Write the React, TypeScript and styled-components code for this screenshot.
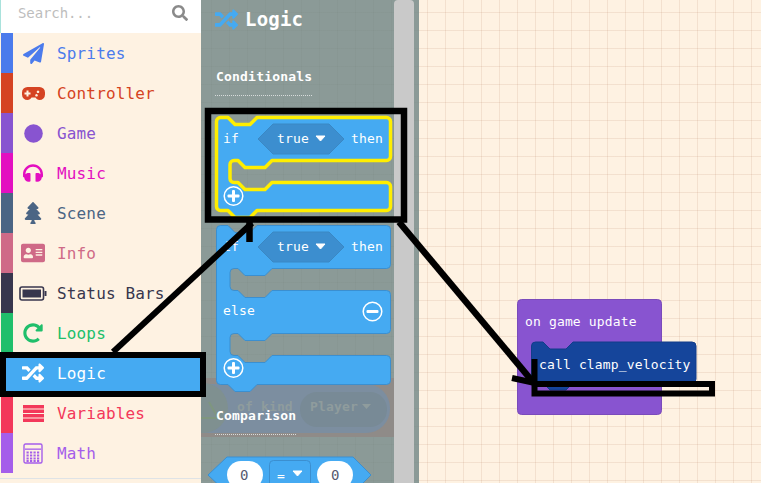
import { ReactNode } from 'react'
import styled, { createGlobalStyle } from 'styled-components'
import {
  FaPaperPlane,
  FaHeadphones,
  FaTree,
  FaAddressCard,
  FaRedoAlt,
  FaRandom,
  FaSearch,
} from 'react-icons/fa'

const MONO = '"DejaVu Sans Mono", "Liberation Mono", monospace'
const CREAM = '#fef2e2'
const LOGIC = '#45aaf2'
const LOGIC_DARK = '#3c8ecf'

const GlobalStyle = createGlobalStyle`
  html, body {
    margin: 0;
    padding: 0;
    background: ${CREAM};
    font-family: ${MONO};
  }
`

const Page = styled.div`
  position: relative;
  display: flex;
  width: 761px;
  height: 483px;
  overflow: hidden;
`

const Sidebar = styled.div`
  width: 201px;
  flex: none;
  display: flex;
  flex-direction: column;
  background: ${CREAM};
`

const SearchBar = styled.div`
  height: 33px;
  flex: none;
  display: flex;
  align-items: center;
  justify-content: space-between;
  padding: 0 13px 7px 17px;
  background: #fff;
  border-left: 1px solid #a9e2dc;
  box-sizing: border-box;
  color: #8a8a8a;
`

const SearchHint = styled.span`
  color: #bdbdbd;
  font-size: 14px;
  letter-spacing: -0.1px;
`

const Category = styled.div<{ $color: string; $active?: boolean }>`
  height: 40px;
  flex: none;
  display: flex;
  align-items: center;
  margin-left: 1px;
  border-left: 12px solid ${(p) => p.$color};
  background: ${(p) => (p.$active ? p.$color : 'transparent')};
  color: ${(p) => (p.$active ? '#fff' : p.$color)};
  font-size: 16px;
  letter-spacing: 0.15px;
  white-space: pre;
`

const CategoryIcon = styled.span`
  width: 40px;
  margin-right: 4px;
  flex: none;
  display: flex;
  align-items: center;
  justify-content: center;
`

const SidebarFoot = styled.div`
  margin-top: 5px;
  border-top: 1px solid #dfe3e6;
`

const Flyout = styled.div`
  position: relative;
  width: 218px;
  flex: none;
  display: flex;
  padding-right: 5px;
  box-sizing: border-box;
  background-color: #8b9a97;
  background-image:
    linear-gradient(rgba(70, 60, 50, 0.035) 1px, transparent 1px),
    linear-gradient(90deg, rgba(70, 60, 50, 0.035) 1px, transparent 1px);
  background-size: 18px 18px;
  background-position: 10px 12px;
`

const GhostBlock = styled.svg`
  position: absolute;
  left: 0;
  top: 378px;
`

const FlyoutBody = styled.div`
  position: relative;
  flex: 1;
  display: flex;
  flex-direction: column;
  min-width: 0;
`

const Scrollbar = styled.div`
  width: 20px;
  flex: none;
  background: #c9c9c9;
  border-radius: 4px 4px 0 0;
`

const FlyoutTitle = styled.div`
  height: 38px;
  flex: none;
  display: flex;
  align-items: center;
  gap: 7px;
  padding-left: 14px;
  color: #fff;
  font-size: 19px;
  font-weight: bold;
  letter-spacing: 0.2px;
`

const SectionHeading = styled.div<{ $width: number; $top: number }>`
  width: ${(p) => p.$width}px;
  height: 27px;
  flex: none;
  padding-left: 1px;
  box-sizing: content-box;
  margin: ${(p) => p.$top}px 0 0 14px;
  color: #fff;
  font-size: 13px;
  font-weight: bold;
  letter-spacing: 0.2px;
  line-height: 18px;
  border-bottom: 1px dotted #d8dcdc;
`

const BlockArt = styled.svg<{ $top?: number }>`
  display: block;
  flex: none;
  margin-top: ${(p) => p.$top ?? 0}px;
  overflow: visible;
`

const BlockText = styled.text`
  fill: #fff;
  font-family: ${MONO};
  font-size: 13px;
  letter-spacing: 0.15px;
`

const ValueText = styled(BlockText)`
  fill: #575a70;
  font-size: 14px;
`

const GhostText = styled(BlockText)`
  fill: #8f9c9d;
  font-weight: bold;
`

const Workspace = styled.div`
  position: relative;
  flex: 1;
  background-color: ${CREAM};
  background-image:
    linear-gradient(rgba(190, 140, 110, 0.17) 1px, transparent 1px),
    linear-gradient(90deg, rgba(190, 140, 110, 0.17) 1px, transparent 1px);
  background-size: 18px 18px;
  background-position: 8px 12px;
`

const CanvasBlock = styled.svg`
  position: absolute;
  left: 98px;
  top: 299px;
`

const Annotations = styled.svg`
  position: absolute;
  left: 0;
  top: 0;
  pointer-events: none;
`

const Gamepad = () => (
  <svg width="23" height="13" viewBox="0 0 23 13">
    <path
      fillRule="evenodd"
      fill="currentColor"
      d="M5.5 0h12a5.5 5.5 0 0 1 5.5 5.5v2a5.5 5.5 0 0 1-5.5 5.5c-2 0-3-1-4-2.5h-4c-1 1.500-2 2.500-4 2.500A5.500 5.500 0 0 1 0 7.500v-2A5.500 5.500 0 0 1 5.500 0ZM4.500 3.500v2h-2v2h2v2h2v-2h2v-2h-2v-2ZM16 3.500a1.300 1.300 0 1 0 .01 0ZM14.500 7a1.300 1.300 0 1 0 .01 0Z"
    />
  </svg>
)

const GameDot = () => (
  <svg width="19" height="19" viewBox="0 0 19 19">
    <circle cx="9.500" cy="9.500" r="9.300" fill="currentColor" />
  </svg>
)

const Battery = () => (
  <svg width="28" height="15" viewBox="0 0 28 15">
    <rect x="1" y="1" width="23.500" height="13" rx="2" fill="none" stroke="currentColor" strokeWidth="1.600" />
    <rect x="3.500" y="3.500" width="18.500" height="8" fill="currentColor" />
    <rect x="25.500" y="5" width="2" height="5" fill="currentColor" />
  </svg>
)

const Bars = () => (
  <svg width="21" height="17" viewBox="0 0 21 17">
    {[0, 4.500, 9, 13.500].map((y) => (
      <rect key={y} y={y} width="21" height="3.500" fill="currentColor" />
    ))}
  </svg>
)

const Calculator = () => (
  <svg width="20" height="21" viewBox="0 0 20 21">
    <rect x="1" y="1" width="18" height="19" rx="1.500" fill="none" stroke="currentColor" strokeWidth="1.400" />
    <rect x="2" y="5.500" width="16" height="1.300" fill="currentColor" />
    {[8.500, 11.500, 14.500, 17].map((y) =>
      [3.500, 7, 10.500, 14].map((x) => (
        <rect key={`${x}-${y}`} x={x} y={y} width="2.200" height="2" fill="currentColor" />
      )),
    )}
  </svg>
)

interface CategoryItem {
  label: string
  color: string
  icon: ReactNode
  active?: boolean
}

const categories: CategoryItem[] = [
  { label: 'Sprites', color: '#4b7bec', icon: <FaPaperPlane size={21} /> },
  { label: 'Controller', color: '#d54322', icon: <Gamepad /> },
  { label: 'Game', color: '#8854d0', icon: <GameDot /> },
  { label: 'Music', color: '#e30fc0', icon: <FaHeadphones size={20} /> },
  { label: 'Scene', color: '#4b6584', icon: <FaTree size={22} /> },
  { label: 'Info', color: '#cf6a87', icon: <FaAddressCard size={24} /> },
  { label: 'Status Bars', color: '#38364d', icon: <Battery /> },
  { label: 'Loops', color: '#20bf6b', icon: <FaRedoAlt size={20} /> },
  { label: 'Logic', color: LOGIC, icon: <FaRandom size={22} />, active: true },
  { label: 'Variables', color: '#f3385a', icon: <Bars /> },
  { label: 'Math', color: '#a55eea', icon: <Calculator /> },
]

// top edge, the gaps of the C shapes as [row bottom, next row top], bottom edge
function blockPath(top: number, gaps: [number, number][], end: number) {
  let d = `M15.500 ${top + 4} a4 4 0 0 1 4 -4 H27 l7 7 h15 l7 -7 H185.500 a4 4 0 0 1 4 4 `
  gaps.forEach(([bottom, next]) => {
    d += `V${bottom - 4} a4 4 0 0 1 -4 4 H71 l-7 7 h-20 l-7 -7 H33 a4 4 0 0 0 -4 4 V${next - 4} a4 4 0 0 0 4 4 H37 l7 7 h20 l7 -7 H185.500 a4 4 0 0 1 4 4 `
  })
  return `${d}V${end - 4} a4 4 0 0 1 -4 4 H56 l-7 7 h-15 l-7 -7 H19.500 a4 4 0 0 1 -4 -4 Z`
}

const Caret = ({ x, y }: { x: number; y: number }) => (
  <path d={`M${x} ${y} h9 l-4.500 5 Z`} fill="#fff" stroke="#fff" strokeWidth="1" strokeLinejoin="round" />
)

const TrueDropdown = ({ y }: { y: number }) => (
  <g>
    <path
      d={`M57 ${y + 15} L72 ${y} H128 L143 ${y + 15} L128 ${y + 30} H72 Z`}
      fill={LOGIC_DARK}
      stroke="#3a88c4"
    />
    <BlockText x="76" y={y + 19}>true</BlockText>
    <Caret x={115} y={y + 12} />
  </g>
)

const RoundButton = ({ x, y, minus }: { x: number; y: number; minus?: boolean }) => (
  <g>
    <circle cx={x} cy={y} r="9.300" fill="none" stroke="#fff" strokeWidth="1.500" />
    <rect x={x - 6} y={y - 1.500} width="12" height="3" rx="1" fill="#fff" />
    {!minus && <rect x={x - 1.500} y={y - 6} width="3" height="12" rx="1" fill="#fff" />}
  </g>
)

const IfThenBlock = () => (
  <BlockArt width="193" height="110">
    <path
      d={blockPath(4.500, [[47.500, 69.500]], 97.500)}
      fill={LOGIC}
      stroke="#ffee00"
      strokeWidth="3.500"
      strokeLinejoin="round"
    />
    <BlockText x="22" y="30">if</BlockText>
    <TrueDropdown y={11} />
    <BlockText x="150" y="30">then</BlockText>
    <RoundButton x={32.500} y={83} />
  </BlockArt>
)

const IfElseBlock = () => (
  <BlockArt width="193" height="170">
    <path
      d={blockPath(2.500, [[45.500, 67.500], [110.500, 132.500]], 161.500)}
      fill={LOGIC}
      stroke="#3b8fd0"
    />
    <BlockText x="22" y="28">if</BlockText>
    <TrueDropdown y={9} />
    <BlockText x="150" y="28">then</BlockText>
    <BlockText x="22" y="92">else</BlockText>
    <RoundButton x={171.500} y={88.500} minus />
    <RoundButton x={32.500} y={145} />
  </BlockArt>
)

const CompareBlock = () => (
  <BlockArt width="193" height="38" $top={21}>
    <path d="M7 19 L26 1 H152 L170 19 L152 37 H26 Z" fill={LOGIC} stroke="#3b8fd0" />
    <rect x="26" y="5" width="36" height="28" rx="14" fill="#fff" />
    <ValueText x="39" y="24">0</ValueText>
    <rect x="68.500" y="4.500" width="41" height="29" rx="4" fill={LOGIC} stroke="#3b8fd0" />
    <BlockText x="76" y="24">=</BlockText>
    <Caret x={92} y={15} />
    <rect x="116" y="5" width="36" height="28" rx="14" fill="#fff" />
    <ValueText x="130" y="24">0</ValueText>
  </BlockArt>
)

export default function App() {
  return (
    <Page>
      <GlobalStyle />
      <Sidebar>
        <SearchBar>
          <SearchHint>Search...</SearchHint>
          <FaSearch size={16} />
        </SearchBar>
        {categories.map((item) => (
          <Category key={item.label} $color={item.color} $active={item.active}>
            <CategoryIcon>{item.icon}</CategoryIcon>
            {item.label}
          </Category>
        ))}
        <SidebarFoot />
      </Sidebar>

      <Flyout>
        <GhostBlock width="193" height="59">
          <rect width="193" height="59" fill="#8f8b88" />
          <rect x="-20" y="6" width="209" height="49" rx="24" fill="#7c8ea0" />
          <circle cx="2" cy="30" r="25" fill="#7f9090" />
          <path d="M8 24 L17 40 H0" fill="none" stroke="#7f967f" strokeWidth="2" />
          <GhostText x="36" y="33">of kind</GhostText>
          <rect x="99" y="14" width="87" height="35" rx="17" fill="#788a96" />
          <GhostText x="109" y="33">Player</GhostText>
          <path d="M161 26 h9 l-4.500 5 Z" fill="#8f9c9d" />
        </GhostBlock>
        <FlyoutBody>
          <FlyoutTitle>
            <FaRandom size={23} color={LOGIC} />
            Logic
          </FlyoutTitle>
          <SectionHeading $width={96} $top={30}>Conditionals</SectionHeading>
          <BlockArt width="193" height="0" $top={17} />
          <IfThenBlock />
          <IfElseBlock />
          <SectionHeading $width={80} $top={14}>Comparison</SectionHeading>
          <CompareBlock />
        </FlyoutBody>
        <Scrollbar />
      </Flyout>

      <Workspace>
        <CanvasBlock width="180" height="118">
          <rect x="0.500" y="0.500" width="144" height="115" rx="4" fill="#8854d0" stroke="#7a4bbb" />
          <BlockText x="8" y="27">on game update</BlockText>
          <path
            d="M14.500 47 a4 4 0 0 1 4 -4 H26 l7 7 h16 l7 -7 H175 a4 4 0 0 1 4 4 V80 a4 4 0 0 1 -4 4 H56 l-7 7 h-16 l-7 -7 H18.500 a4 4 0 0 1 -4 -4 Z"
            fill="#15459b"
            stroke="#123d8a"
          />
          <BlockText x="22" y="70">call clamp_velocity</BlockText>
        </CanvasBlock>
      </Workspace>

      <Annotations width="761" height="483">
        <g fill="none" stroke="#000">
          <rect x="3" y="355" width="200" height="39" strokeWidth="6" />
          <rect x="208" y="111" width="196" height="108.500" strokeWidth="6.500" />
          <path d="M113 352 L252 223" strokeWidth="6" />
          <path d="M249.500 222 V242" strokeWidth="6.500" />
          <path d="M399 222 L533 382" strokeWidth="6.500" />
          <path d="M534.500 359 V384" strokeWidth="6" />
          <path d="M512 378 L535 383" strokeWidth="6" />
          <rect x="534.500" y="384" width="177.500" height="9.500" strokeWidth="6" />
        </g>
      </Annotations>
    </Page>
  )
}
